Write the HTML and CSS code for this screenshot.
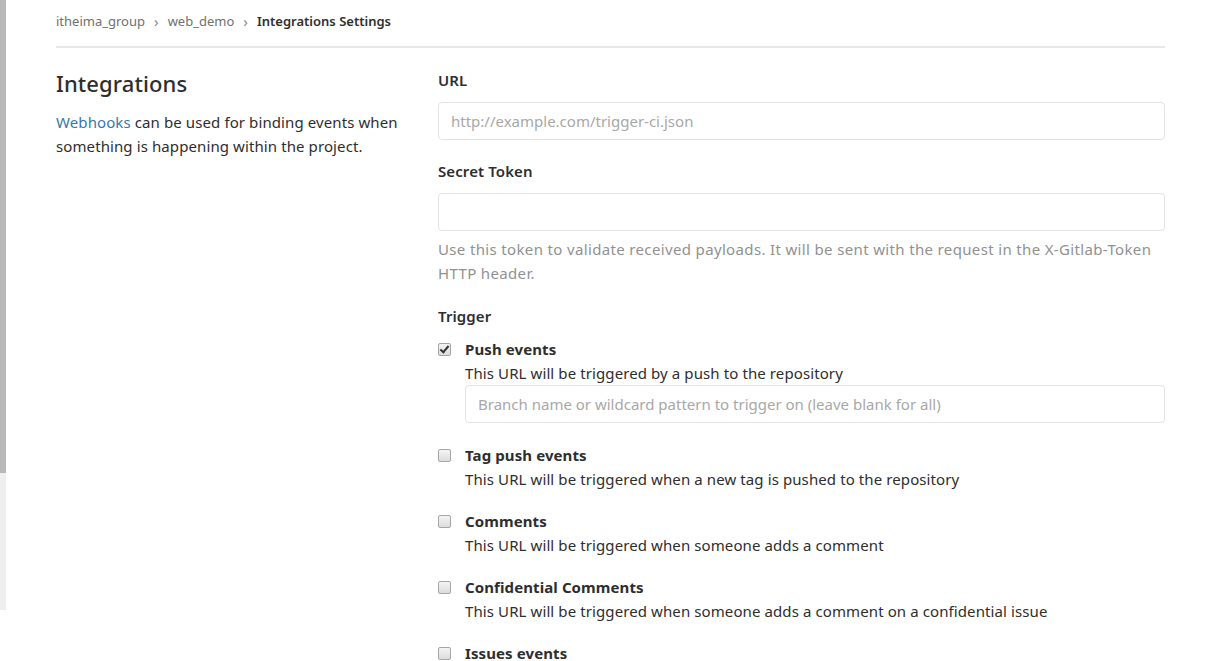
FILE: index.html
```html
<!DOCTYPE html>
<html lang="en">

<head>
    <meta charset="UTF-8">
    <meta name="viewport" content="width=device-width, initial-scale=1.0">
    <title>Integrations Settings</title>

    <link rel="stylesheet" href="styles.css">

</head>

<body>
    <div class="rail">
        <div class="rail-thumb"></div>
        <div class="rail-track"></div>
    </div>

    <main class="page">
        <nav class="breadcrumbs">
            <a href="#">itheima_group</a>
            <span class="sep">&rsaquo;</span>
            <a href="#">web_demo</a>
            <span class="sep">&rsaquo;</span>
            <span class="current">Integrations Settings</span>
        </nav>

        <div class="settings">
            <section class="intro">
                <h4>Integrations</h4>
                <p><a href="#">Webhooks</a> can be used for binding events when something is happening within the project.</p>
            </section>

            <form class="hook-form">
                <div class="field">
                    <label for="url">URL</label>
                    <input type="text" id="url" placeholder="http://example.com/trigger-ci.json">
                </div>

                <div class="field">
                    <label for="token">Secret Token</label>
                    <input type="text" id="token">
                    <p class="help">Use this token to validate received payloads. It will be sent with the request in the X-Gitlab-Token HTTP header.</p>
                </div>

                <div class="field">
                    <label>Trigger</label>
                    <ul class="triggers">
                        <li>
                            <input type="checkbox" id="push" checked>
                            <div>
                                <label for="push">Push events</label>
                                <p>This URL will be triggered by a push to the repository</p>
                                <input type="text" class="branch" placeholder="Branch name or wildcard pattern to trigger on (leave blank for all)">
                            </div>
                        </li>
                        <li>
                            <input type="checkbox" id="tag">
                            <div>
                                <label for="tag">Tag push events</label>
                                <p>This URL will be triggered when a new tag is pushed to the repository</p>
                            </div>
                        </li>
                        <li>
                            <input type="checkbox" id="note">
                            <div>
                                <label for="note">Comments</label>
                                <p>This URL will be triggered when someone adds a comment</p>
                            </div>
                        </li>
                        <li>
                            <input type="checkbox" id="conf-note">
                            <div>
                                <label for="conf-note">Confidential Comments</label>
                                <p>This URL will be triggered when someone adds a comment on a confidential issue</p>
                            </div>
                        </li>
                        <li>
                            <input type="checkbox" id="issues">
                            <div>
                                <label for="issues">Issues events</label>
                                <p>This URL will be triggered when an issue is created, updated, closed, or merged</p>
                            </div>
                        </li>
                    </ul>
                </div>
            </form>
        </div>
    </main>
</body>

</html>
```

FILE: styles.css
```css
* {
    box-sizing: border-box;
}

body {
    margin: 0;
    display: flex;
    height: 661px;
    overflow: hidden;
    background: #fff;
    color: #2e2e2e;
    font-family: "Noto Sans", "Open Sans", sans-serif;
    font-size: 15px;
    line-height: 24px;
    letter-spacing: 0.1px;
}

a {
    color: #3777b0;
    text-decoration: none;
}

.rail {
    width: 6px;
    flex-shrink: 0;
    display: flex;
    flex-direction: column;
}

.rail-thumb {
    height: 473px;
    background: #b9b9b9;
}

.rail-track {
    height: 137px;
    background: #efefef;
}

.page {
    margin-left: 50px;
    width: 1109px;
}

.breadcrumbs {
    display: flex;
    align-items: center;
    gap: 9px;
    height: 48px;
    padding-bottom: 4px;
    border-bottom: 2px solid #e8e8e8;
    font-size: 13px;
    letter-spacing: 0;
}

.breadcrumbs a {
    color: #707070;
}

.breadcrumbs .sep {
    color: #8a8a8a;
    font-size: 15px;
}

.breadcrumbs .current {
    font-weight: 600;
}

.settings {
    display: flex;
    padding-top: 20px;
}

.intro {
    width: 382px;
    flex-shrink: 0;
    padding-right: 16px;
}

.intro h4 {
    margin: 0 0 12px;
    font-size: 22px;
    font-weight: 500;
    line-height: 30px;
}

.intro p {
    margin: 0;
}

.hook-form {
    flex: 1;
}

.field {
    margin-bottom: 19px;
}

.field > label {
    display: block;
    margin-bottom: 10px;
    font-weight: 600;
}

input[type="text"] {
    display: block;
    width: 100%;
    height: 38px;
    padding: 0 12px;
    border: 1px solid #e3e3e3;
    border-radius: 4px;
    font: inherit;
    color: #2e2e2e;
}

input::placeholder {
    color: #a8a8a8;
}

.help {
    margin: 6px 0 0;
    color: #919191;
    letter-spacing: 0.35px;
}

.triggers {
    list-style: none;
    margin: -1px 0 0;
    padding: 0;
}

.triggers li {
    display: flex;
    gap: 14px;
    margin-bottom: 18px;
}

.triggers input[type="checkbox"] {
    appearance: none;
    position: relative;
    width: 13px;
    height: 13px;
    margin: 6px 0 0;
    flex-shrink: 0;
    border: 1px solid #a6a6a6;
    border-radius: 2px;
    background: linear-gradient(#f4f4f4, #dcdcdc);
}

.triggers input[type="checkbox"]:checked::after {
    content: "";
    position: absolute;
    left: 3px;
    top: 0;
    width: 3px;
    height: 7px;
    border: solid #333;
    border-width: 0 2px 2px 0;
    transform: rotate(40deg);
}

.triggers li > div {
    flex: 1;
}

.triggers label {
    display: block;
    font-weight: 700;
}

.triggers p {
    margin: 0;
}

.branch {
    margin-bottom: 2px;
}
```
